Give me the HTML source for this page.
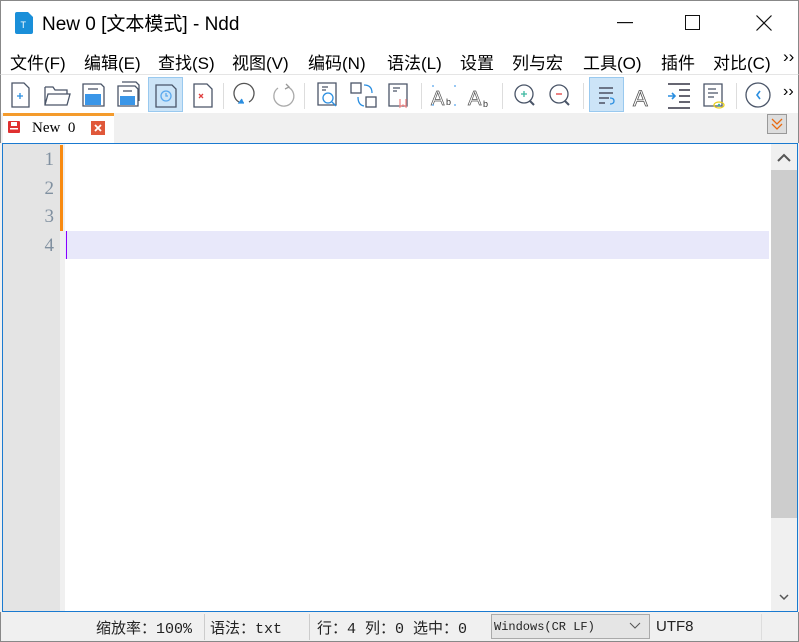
<!DOCTYPE html>
<html><head><meta charset="utf-8"><style>
*{margin:0;padding:0;box-sizing:border-box}
body{width:799px;height:642px;background:#f0f0f0;position:relative;overflow:hidden;font-family:"Liberation Sans","Noto Sans CJK SC",sans-serif}
.abs{position:absolute}
#title{left:0;top:0;width:799px;height:44px;background:#fff;border-left:1px solid #888;border-right:1px solid #888;border-top:1px solid #888}
#menu{left:0;top:44px;width:799px;height:30px;background:#fff;border-left:1px solid #888;border-right:1px solid #888;font-size:17px;color:#000}
#menu span{position:absolute;top:5px;white-space:nowrap}
#tb{left:0;top:74px;width:799px;height:39px;background:#fff;border-left:1px solid #888;border-right:1px solid #888;border-top:1px solid #e5e5e5}
.sep{position:absolute;top:8px;width:1px;height:26px;background:#ddd}
.sel{position:absolute;top:2px;width:35px;height:35px;background:#cce4f7;border:1px solid #99c9ef}
</style></head><body>
<div id="title" class="abs">
 <svg class="abs" style="left:13px;top:11px" width="20" height="22"><path d="M1 2 Q1 0 3 0 H14 L19 5 V20 Q19 22 17 22 H3 Q1 22 1 20Z" fill="#1a8fd9"/><text x="6.5" y="16" font-size="9" fill="#fff" font-family="Liberation Sans">T</text></svg>
 <span class="abs" style="left:41px;top:8px;font-size:19px;color:#000">New 0 [文本模式] - Ndd</span>
 <svg class="abs" style="left:616px;top:21px" width="16" height="2"><rect width="16" height="1.2" fill="#111"/></svg>
 <svg class="abs" style="left:684px;top:14px" width="16" height="16"><rect x="0.5" y="0.5" width="14" height="14" fill="none" stroke="#111"/></svg>
 <svg class="abs" style="left:755px;top:14px" width="16" height="16"><path d="M0.5 0.5L15.5 15.5M15.5 0.5L0.5 15.5" stroke="#111" stroke-width="1.2"/></svg>
</div>
<div id="menu" class="abs">
 <span style="left:9px">文件(F)</span><span style="left:83px">编辑(E)</span><span style="left:157px">查找(S)</span><span style="left:231px">视图(V)</span><span style="left:307px">编码(N)</span><span style="left:386px">语法(L)</span><span style="left:459px">设置</span><span style="left:511px">列与宏</span><span style="left:582px">工具(O)</span><span style="left:660px">插件</span><span style="left:712px">对比(C)</span><span style="left:782px;top:3px">››</span>
</div>
<div id="tb" class="abs">
 <div class="sel" style="left:147px"></div><div class="sel" style="left:588px"></div>
 <div class="sep" style="left:222px"></div><div class="sep" style="left:303px"></div><div class="sep" style="left:420px"></div><div class="sep" style="left:501px"></div><div class="sep" style="left:582px"></div><div class="sep" style="left:735px"></div>
 <svg class="abs" style="left:0;top:0" width="799" height="39" fill="none" stroke="#4a5568" stroke-width="1.3">
  <path d="M11 8h12l5 5v19h-17z"/><path d="M16 21h6M19 18v6" stroke="#2a8ee0"/>
  <path d="M44 12h8l2 3h12v4M44 12v18h22l3-11h-22l-3 11"/>
  <path d="M82 9h18l3 3v19h-21z"/><rect x="84" y="19" width="16" height="11" fill="#3a96e8" stroke="none"/><path d="M87 14h10"/>
  <path d="M121 7h14l3 3v16"/><path d="M117 11h17l3 3v17h-20z"/><rect x="119" y="21" width="15" height="9" fill="#3a96e8" stroke="none"/><path d="M122 16h9"/>
  <path d="M155 10h16l4 4v18h-20z"/><circle cx="165" cy="21" r="5" stroke="#5aa8ee"/><path d="M165 18v3h2" stroke="#5aa8ee"/>
  <path d="M193 9h13l5 5v18h-18z"/><path d="M198 19l4 4M202 19l-4 4" stroke="#e04040"/>
  <path d="M238 27a10 10 0 1 1 10 0" stroke="#555"/><path d="M241 24l-3 4h5" stroke="#2a8ee0" fill="#2a8ee0"/>
  <path d="M287 12a10 10 0 1 1-10 1" stroke="#aaa"/><path d="M285 9l3 3-4 2" stroke="#999"/>
  <path d="M317 8h18v22h-18z"/><path d="M321 12h6M321 15h4"/><circle cx="327" cy="23" r="5" stroke="#2a8ee0"/><path d="M331 27l4 4" stroke="#2a8ee0"/>
  <rect x="350" y="8" width="10" height="10"/><rect x="365" y="22" width="10" height="10"/><path d="M363 10q8 0 8 8M357 22q0 8 6 9" stroke="#2a8ee0"/>
  <path d="M388 9h18v22h-18z"/><path d="M392 13h7M392 16h4"/><path d="M399 24v8l3-2 3 2v-8" stroke="#e88"/>
  <text x="430" y="30" font-size="20" fill="#fff" stroke="#555" stroke-width="0.7" font-family="Liberation Sans">A</text><text x="445" y="30" font-size="9" fill="#333" stroke="none" font-family="Liberation Sans">b</text>
  <path d="M431 11h2M453 11h2M431 30h2M453 30h2" stroke="#5aa8ee"/>
  <text x="467" y="30" font-size="20" fill="#fff" stroke="#555" stroke-width="0.7" font-family="Liberation Sans">A</text><text x="482" y="32" font-size="9" fill="#333" stroke="none" font-family="Liberation Sans">b</text>
  <circle cx="523" cy="19" r="9"/><path d="M529 26l4 4" stroke-width="2"/><path d="M520 19h6M523 16v6" stroke="#3bb8a0"/>
  <circle cx="558" cy="19" r="9"/><path d="M564 26l4 4" stroke-width="2"/><path d="M555 19h6" stroke="#e04040"/>
  <path d="M598 13h14M598 18h14M598 23h10M598 28h6" stroke="#334"/><path d="M609 23q4 0 4 3t-4 3" stroke="#2a8ee0"/>
  <text x="632" y="31" font-size="22" fill="#fff" stroke="#555" stroke-width="0.8" font-family="Liberation Sans">A</text>
  <path d="M667 9h22M678 15h11M678 21h11M678 27h11M667 33h22" stroke="#334" stroke-width="1.6"/><path d="M667 21h7M671 18l3 3-3 3" stroke="#2a8ee0" stroke-width="1.6"/>
  <path d="M703 9h18v22h-18z"/><path d="M707 14h8M707 18h10M707 22h6"/><ellipse cx="718" cy="30" rx="5" ry="3" stroke="#e8d020"/><circle cx="718" cy="30" r="1.2" fill="#3bb8a0" stroke="none"/>
  <circle cx="757" cy="20" r="12"/><path d="M759 16l-3 4 3 4" stroke="#2a8ee0" stroke-width="1.6"/>
 </svg>
 <span class="abs" style="left:782px;top:8px;font-size:16px">››</span>
</div>
<div class="abs" style="left:0;top:113px;width:799px;height:30px;background:#f0f0f0;border-left:1px solid #888;border-right:1px solid #888"></div>
<div class="abs" style="left:3px;top:113px;width:111px;height:30px;background:#fff;border-top:3px solid #f49b2c"></div>
<svg class="abs" style="left:8px;top:121px" width="12" height="12"><rect width="12" height="12" rx="1" fill="#e03030"/><rect x="3" y="1" width="6" height="4" fill="#fff"/><rect x="2" y="7" width="8" height="1.5" fill="#fff"/></svg>
<span class="abs" style="left:32px;top:120px;font-family:'Liberation Serif',serif;font-size:15px">New&nbsp; 0</span>
<svg class="abs" style="left:91px;top:121px" width="14" height="14"><rect width="14" height="14" fill="#e0583a"/><path d="M4 4l6 6M10 4l-6 6" stroke="#fff" stroke-width="1.8"/></svg>
<div class="abs" style="left:767px;top:114px;width:20px;height:20px;border:1px solid #999;background:#ddd"></div>
<svg class="abs" style="left:769px;top:116px" width="16" height="16" fill="none" stroke="#e86a10" stroke-width="1.3"><path d="M3 3l5 5 5-5M3 8l5 5 5-5"/></svg>
<div class="abs" style="left:2px;top:143px;width:796px;height:469px;border:1px solid #1a7ad0;background:#fff"></div>
<div class="abs" style="left:3px;top:144px;width:57px;height:467px;background:#e4e4e4"></div>
<div class="abs" style="left:60px;top:144px;width:5px;height:467px;background:#f0f0f0"></div>
<div class="abs" style="left:60px;top:145px;width:3px;height:86px;background:#f88a10"></div>
<div class="abs" style="left:65px;top:231px;width:704px;height:28px;background:#e8e8fa"></div>
<div class="abs" style="left:66px;top:231px;width:1px;height:28px;background:#8a00ff"></div>
<div class="abs" style="left:20px;top:146px;width:34px;font-family:'Liberation Serif',serif;font-size:19px;color:#8090a0;text-align:right;line-height:28.5px">1<br>2<br>3<br>4</div>
<div class="abs" style="left:771px;top:144px;width:26px;height:467px;background:#f0f0f0"></div>
<div class="abs" style="left:771px;top:170px;width:26px;height:348px;background:#cdcdcd"></div>
<svg class="abs" style="left:776px;top:152px" width="16" height="12"><path d="M2 9l6-6 6 6" fill="none" stroke="#555" stroke-width="2"/></svg>
<svg class="abs" style="left:779px;top:593px" width="10" height="8"><path d="M1 2l4 4 4-4" fill="none" stroke="#555" stroke-width="1.5"/></svg>
<div class="abs" style="left:0;top:612px;width:799px;height:30px;background:#f0f0f0;border-left:1px solid #888;border-right:1px solid #888;border-bottom:1px solid #888;font-family:'Liberation Mono','Noto Sans CJK SC',monospace;font-size:15px;color:#222;white-space:nowrap">
 <span class="abs" style="left:95px;top:5px">缩放率：100%</span>
 <div class="abs" style="left:203px;top:2px;width:1px;height:26px;background:#ccc"></div>
 <span class="abs" style="left:209px;top:5px">语法：txt</span>
 <div class="abs" style="left:308px;top:2px;width:1px;height:26px;background:#ccc"></div>
 <span class="abs" style="left:316px;top:5px">行：4 列：0 选中：0</span>
 <div class="abs" style="left:490px;top:2px;width:159px;height:25px;border:1px solid #aaa;background:#e5e5e5;font-size:12px;padding:5px 2px">Windows(CR LF)</div>
 <svg class="abs" style="left:628px;top:10px" width="12" height="8"><path d="M1 1l5 5 5-5" fill="none" stroke="#555"/></svg>
 <span class="abs" style="left:655px;top:6px;font-family:'Liberation Sans',sans-serif">UTF8</span>
 <div class="abs" style="left:760px;top:2px;width:1px;height:26px;background:#ddd"></div>
</div>
</body></html>
